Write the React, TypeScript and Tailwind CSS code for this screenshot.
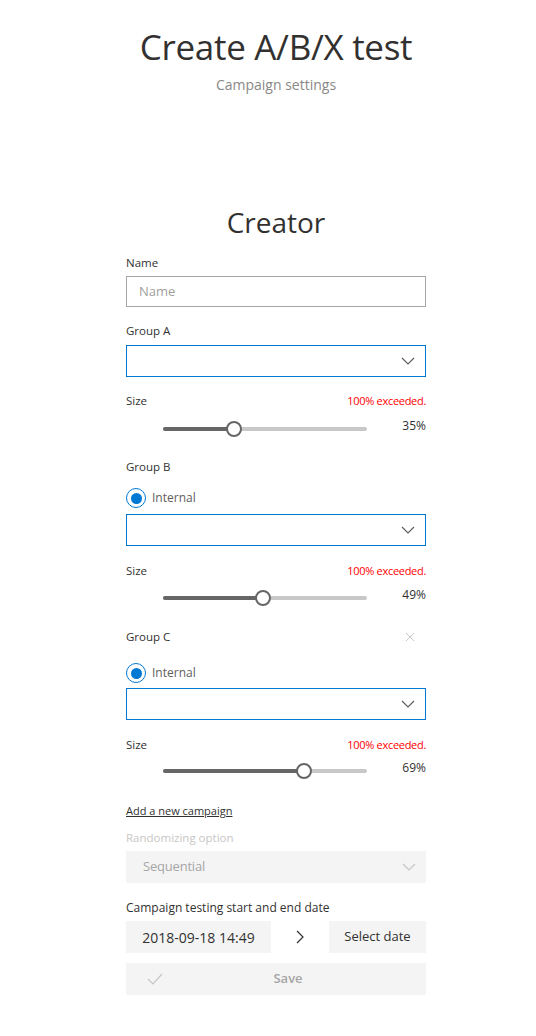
import React from "react";

const Chevron = ({ color = "#605e5c" }: { color?: string }) => (
  <svg width="14" height="8" viewBox="0 0 14 8" fill="none">
    <path d="M1 1l6 6 6-6" stroke={color} strokeWidth="1.2" />
  </svg>
);

const Dropdown = ({ className = "" }: { className?: string }) => (
  <div className={`h-[32px] border border-[#0078d4] flex items-center justify-end pr-[10px] ${className}`}>
    <Chevron />
  </div>
);

const SizeRow = ({ className = "" }: { className?: string }) => (
  <div className={`flex justify-between items-center h-[16px] leading-[16px] ${className}`}>
    <span className="text-[11.5px] text-[#323130]">Size</span>
    <span className="text-[11px] tracking-[-0.3px] text-[#ff0000]">100% exceeded.</span>
  </div>
);

const Slider = ({ value, className = "" }: { value: number; className?: string }) => (
  <div className={`flex items-start ${className}`}>
    <div className="w-[37px]" />
    <div className="w-[204px] h-[24px] relative flex items-center">
      <div className="w-full h-[4px] rounded-full bg-[#c8c8c8] overflow-hidden">
        <div className="h-full bg-[#666666]" style={{ width: `${value}%` }} />
      </div>
      <div
        className="absolute w-[16px] h-[16px] rounded-full bg-white border-2 border-[#666666] top-[4px]"
        style={{ left: `calc(${value}% - 8px)` }}
      />
    </div>
    <div className="flex-1 text-right text-[12px] leading-[16px] text-[#323130] pt-[1px]">{value}%</div>
  </div>
);

const Radio = ({ className = "" }: { className?: string }) => (
  <div className={`flex items-center h-[20px] ${className}`}>
    <div className="w-[20px] h-[20px] rounded-full border-[1.5px] border-[#0078d4] flex items-center justify-center">
      <div className="w-[11px] h-[11px] rounded-full bg-[#0078d4]" />
    </div>
    <span className="ml-[6px] text-[12px] leading-[20px] text-[#605e5c]">Internal</span>
  </div>
);

const Label = ({ children, className = "" }: { children: React.ReactNode; className?: string }) => (
  <div className={`h-[16px] text-[11.5px] leading-[16px] text-[#323130] ${className}`}>{children}</div>
);

export default function App() {
  return (
    <div className="w-[536px] min-h-[1036px] bg-white" style={{ fontFamily: '"Open Sans", "Noto Sans", sans-serif' }}>
      <div className="pt-[25px] pl-[16px] flex flex-col items-center">
        <h1 className="text-[35px] leading-[44px] text-[#323130] tracking-[-0.3px]">Create A/B/X test</h1>
        <div className="mt-[6px] text-[14px] leading-[20px] text-[#8a8886]">Campaign settings</div>
        <h2 className="mt-[109px] text-[28px] leading-[36px] text-[#323130]">Creator</h2>
      </div>
      <div className="w-[300px] ml-[126px]">
        <Label className="mt-[15px]">Name</Label>
        <div className="mt-[5px] h-[31px] border border-[#a6a6a6] flex items-center pl-[12px] text-[13px] text-[#a19f9d]">
          Name
        </div>
        <Label className="mt-[16px]">Group A</Label>
        <Dropdown className="mt-[6px]" />
        <SizeRow className="mt-[16px]" />
        <Slider value={35} className="mt-[8px]" />

        <Label className="mt-[18px]">Group B</Label>
        <Radio className="mt-[13px]" />
        <Dropdown className="mt-[6px]" />
        <SizeRow className="mt-[17px]" />
        <Slider value={49} className="mt-[7px]" />

        <div className="mt-[19px] flex justify-between items-center h-[16px]">
          <span className="text-[11.5px] leading-[16px] text-[#323130]">Group C</span>
          <svg width="10" height="10" viewBox="0 0 10 10" className="mr-[11px]">
            <path d="M1 1l8 8M9 1l-8 8" stroke="#c8c6c4" strokeWidth="1" />
          </svg>
        </div>
        <Radio className="mt-[18px]" />
        <Dropdown className="mt-[5px]" />
        <SizeRow className="mt-[17px]" />
        <Slider value={69} className="mt-[6px]" />

        <div className="mt-[20px] h-[16px] text-[11px] leading-[16px] text-[#323130] underline">Add a new campaign</div>
        <div className="mt-[11px] h-[16px] text-[11.5px] leading-[16px] text-[#c8c6c4]">Randomizing option</div>
        <div className="mt-[5px] h-[32px] bg-[#f4f4f4] flex items-center justify-between pl-[17px] pr-[10px]">
          <span className="text-[13px] tracking-[-0.2px] text-[#a6a6a6]">Sequential</span>
          <Chevron color="#c8c6c4" />
        </div>
        <div className="mt-[17px] h-[16px] text-[12px] leading-[16px] text-[#323130]">Campaign testing start and end date</div>
        <div className="mt-[5px] h-[32px] flex items-stretch">
          <div className="w-[145px] bg-[#f4f4f4] flex items-center justify-center text-[14px] text-[#323130]">
            2018-09-18 14:49
          </div>
          <div className="w-[58px] flex items-center justify-center">
            <svg width="8" height="14" viewBox="0 0 8 14" fill="none">
              <path d="M1 1l6 6-6 6" stroke="#323130" strokeWidth="1.2" />
            </svg>
          </div>
          <div className="flex-1 bg-[#f4f4f4] flex items-center justify-center text-[13px] text-[#323130]">
            Select date
          </div>
        </div>
        <div className="mt-[10px] h-[32px] bg-[#f4f4f4] relative flex items-center justify-center pl-[24px]">
          <svg width="16" height="12" viewBox="0 0 16 12" fill="none" className="absolute left-[21px]">
            <path d="M1 6l5 5L15 1" stroke="#c8c6c4" strokeWidth="1.2" />
          </svg>
          <span className="text-[13px] font-semibold text-[#a6a6a6]">Save</span>
        </div>
      </div>
    </div>
  );
}
